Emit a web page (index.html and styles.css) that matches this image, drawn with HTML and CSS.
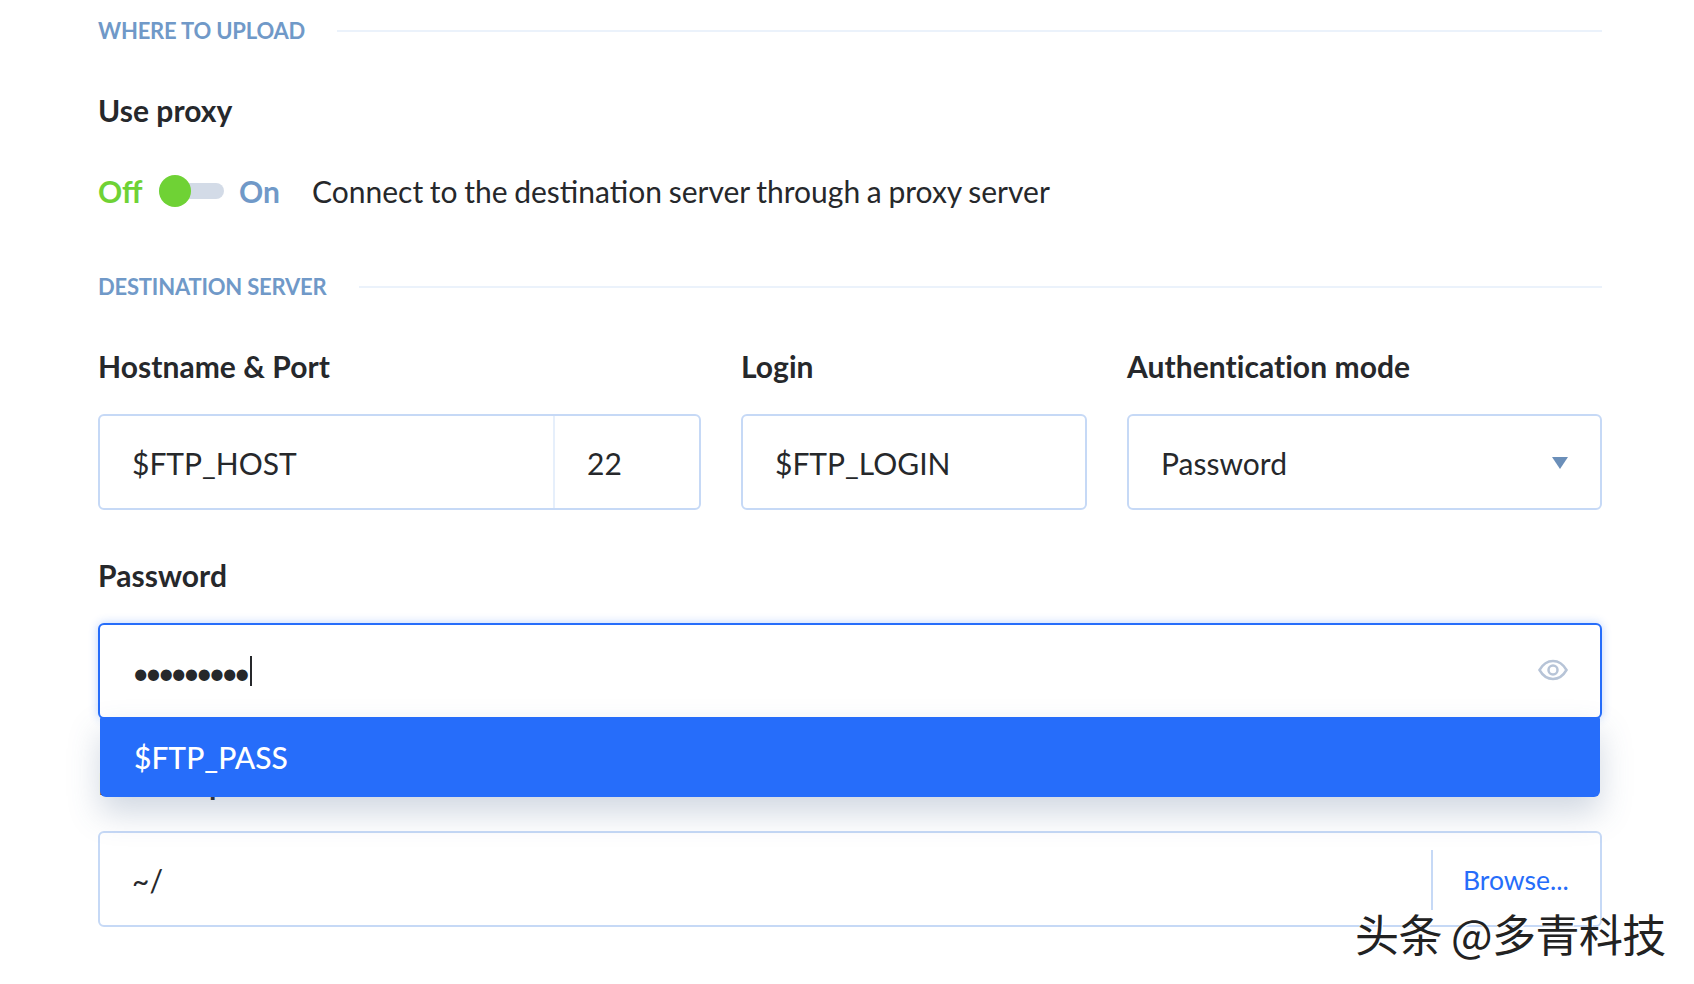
FILE: index.html
```html
<!DOCTYPE html>
<html lang="en">
<head>
<meta charset="utf-8">
<title>Where to upload</title>
<link rel="stylesheet" href="styles.css">
</head>
<body>
<main class="page">
  <div class="section"><span class="section-title">WHERE TO UPLOAD</span><span class="section-line"></span></div>
  <div class="label proxy-label">Use proxy</div>
  <div class="toggle-row">
    <span class="off">Off</span>
    <span class="switch"><span class="knob"></span></span>
    <span class="on">On</span>
    <span class="toggle-desc">Connect to the destination server through a proxy server</span>
  </div>
  <div class="section section-two"><span class="section-title">DESTINATION SERVER</span><span class="section-line"></span></div>
  <div class="server-grid">
    <div class="field">
      <div class="label">Hostname &amp; Port</div>
      <div class="input host-input"><span class="host">$FTP_HOST</span><span class="port">22</span></div>
    </div>
    <div class="field">
      <div class="label">Login</div>
      <div class="input"><span class="value">$FTP_LOGIN</span></div>
    </div>
    <div class="field">
      <div class="label">Authentication mode</div>
      <div class="input select"><span class="value">Password</span><span class="arrow"></span></div>
    </div>
  </div>
  <div class="field password-field">
    <div class="label">Password</div>
    <div class="input focused">
      <span class="value dots">•••••••••</span><span class="caret"></span>
      <svg class="eye" viewBox="0 0 30 22" width="30" height="22" fill="none" stroke="#b7c4d7" stroke-width="2.500"><path d="M1.500 11C5 5 9.500 2 15 2s10 3 13.500 9C25 17 20.500 20 15 20S5 17 1.500 11z"/><circle cx="15" cy="11" r="4.500"/></svg>
    </div>
    <div class="suggest">$FTP_PASS</div>
  </div>
  <div class="field path-field">
    <div class="label">Remote path</div>
    <div class="input path-input"><span class="value path-value">~/</span><span class="browse">Browse...</span></div>
  </div>
</main>
<div class="watermark">头条 @多青科技</div>
</body>
</html>
```
FILE: styles.css
```css
* { box-sizing: border-box; }
html, body { margin: 0; height: 100%; background: #fff; overflow: hidden; }
body { font-family: Lato, "Noto Sans", sans-serif; color: #26282b; position: relative; }
.page { padding: 16px 92px 0 98px; }
.section { display: flex; align-items: center; height: 28px; gap: 32px; }
.section-two { margin-top: 64px; }
.section-title { font-size: 22px; font-weight: 700; letter-spacing: -0.2px; color: #7099c8; white-space: nowrap; }
.section-line { flex: 1; height: 2px; background: #ebf2fb; margin-top: 2px; }
.label { font-size: 30px; font-weight: 700; line-height: 32px; margin-bottom: 32px; white-space: nowrap; letter-spacing: 0.05px; }
.proxy-label { margin-top: 50px; margin-bottom: 48px; }
.toggle-row { display: flex; align-items: center; height: 34px; font-size: 30px; }
.off { color: #6fd235; width: 61px; font-weight: 700; }
.on { color: #7099c8; width: 73px; margin-left: 15px; font-weight: 700; }
.switch { width: 65px; height: 16px; background: #d3dbe7; border-radius: 8px; position: relative; }
.knob { position: absolute; left: 0; top: -8px; width: 32px; height: 32px; border-radius: 50%; background: #6fd235; }
.toggle-desc { white-space: nowrap; word-spacing: -1px; }
.server-grid { display: grid; grid-template-columns: 603px 346px 475px; column-gap: 40px; margin-top: 50px; }
.input { height: 96px; border: 2px solid #c6d9f6; border-radius: 6px; background: #fff; display: flex; align-items: center; font-size: 30px; position: relative; padding-top: 2px; }
.value { padding-left: 32px; flex: 1; }
.host-input { align-items: stretch; padding-top: 0; }
.host { flex: 1; padding: 2px 0 0 32px; display: flex; align-items: center; }
.port { width: 146px; padding: 2px 0 0 32px; border-left: 2px solid #e6effb; display: flex; align-items: center; }
.arrow { width: 0; height: 0; margin-right: 32px; margin-top: 0; border-left: 8px solid transparent; border-right: 8px solid transparent; border-top: 12px solid #6b8fb9; }
.password-field { margin-top: 49px; position: relative; }
.focused { border-color: #266dfa; box-shadow: 0 0 10px rgba(38, 109, 250, .3); }
.dots { flex: 0 0 auto; letter-spacing: -4.700px; padding-top: 0; }
.caret { width: 2px; height: 30px; background: #26282b; margin-left: 4px; margin-top: -2px; }
.eye { margin-left: auto; margin-right: 32px; margin-top: -4px; }
.suggest { position: absolute; left: 2px; right: 2px; top: 158px; height: 80px; display: flex; align-items: center; padding-left: 34px; background: #266dfa; color: #fff; font-size: 30px; font-weight: 500; border-radius: 2px 2px 6px 6px; box-shadow: 0 16px 32px rgba(70, 100, 140, .25); z-index: 2; }
.path-field { margin-top: 48px; }
.path-input { height: 96px; }
.browse { align-self: center; height: 60px; width: 169px; border-left: 2px solid #c6d9f6; color: #266dfa; font-size: 26.500px; display: flex; align-items: center; padding-left: 30px; }
.watermark { position: absolute; left: 1355px; top: 903px; font-family: "Noto Sans CJK SC", sans-serif; font-size: 44px; line-height: 60px; color: #222; white-space: nowrap; letter-spacing: -0.600px; text-shadow: 1px 1px 0 #fff, -1px 0 0 rgba(255,255,255,.6); z-index: 3; }
```
